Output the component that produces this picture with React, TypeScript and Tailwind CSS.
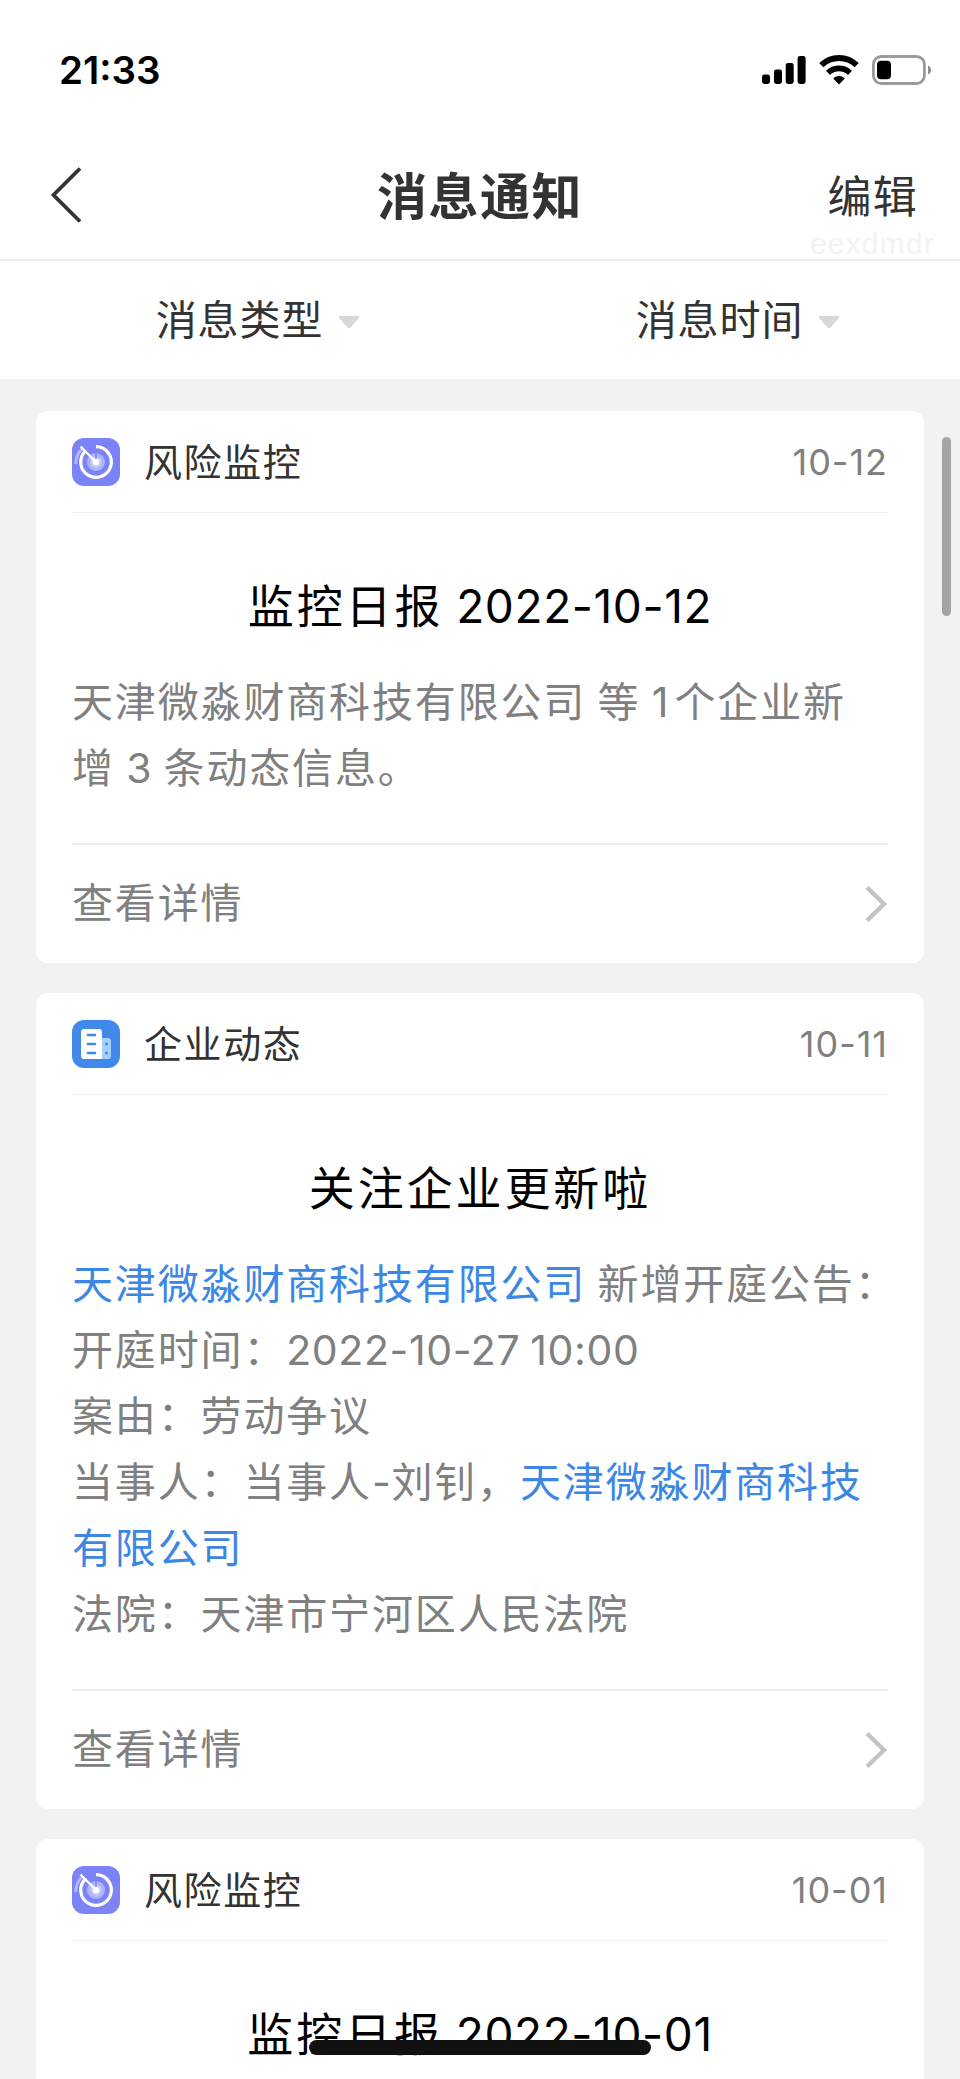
import type { ReactNode } from 'react';

type MessageType = 'risk' | 'company';

interface Message {
  id: number;
  type: MessageType;
  label: string;
  date: string;
  title: ReactNode;
  lines?: ReactNode[];
}

// latin digits sit tighter than the chinese text around them
const Num = ({ children }: { children: ReactNode }) => <span className="tracking-[0.6px]">{children}</span>;

const Company = ({ children }: { children: ReactNode }) => <span className="text-[#3d87e4]">{children}</span>;

const messages: Message[] = [
  {
    id: 1,
    type: 'risk',
    label: '风险监控',
    date: '10-12',
    title: <>监控日报 <Num>2022-10-12</Num></>,
    lines: [
      <>天津微淼财商科技有限公司 等 <span className="tracking-[6px]">1</span>个企业新</>,
      <>增 <Num>3</Num> 条动态信息。</>,
    ],
  },
  {
    id: 2,
    type: 'company',
    label: '企业动态',
    date: '10-11',
    title: '关注企业更新啦',
    lines: [
      <><Company>天津微淼财商科技有限公司</Company> 新增开庭公告：</>,
      <>开庭时间：<Num>2022-10-27 10:00</Num></>,
      '案由：劳动争议',
      <>当事人：当事人<Num>-</Num>刘钊，<Company>天津微淼财商科技</Company></>,
      <Company>有限公司</Company>,
      '法院：天津市宁河区人民法院',
    ],
  },
  {
    id: 3,
    type: 'risk',
    label: '风险监控',
    date: '10-01',
    title: <>监控日报 <Num>2022-10-01</Num></>,
  },
];

function RiskIcon() {
  return (
    <svg width="48" height="48" viewBox="0 0 48 48" fill="none">
      <rect width="48" height="48" rx="12" fill="#7c83f6" />
      <path d="M3.8 26A20 20 0 0 1 10 11" stroke="#b4b8fb" strokeWidth="3" />
      <circle cx="24" cy="24" r="9" fill="#b0b4fa" />
      <circle cx="24" cy="24" r="5.5" fill="#c9ccfc" />
      <path d="M24 14.5V24" stroke="#7c83f6" strokeWidth="1.5" />
      <path d="M24 8.7A15.3 15.3 0 1 1 13.6 12.8" stroke="#fff" strokeWidth="3.2" />
      <path d="M8.5 8.5L24 24" stroke="#fff" strokeWidth="2.4" />
      <circle cx="24" cy="24" r="3.2" fill="#fff" />
    </svg>
  );
}

function CompanyIcon() {
  return (
    <svg width="48" height="48" viewBox="0 0 48 48" fill="none">
      <rect width="48" height="48" rx="12" fill="#4189e8" />
      <path d="M29 18h7a3 3 0 0 1 3 3v15a3 3 0 0 1-3 3h-7z" fill="#a3cdfb" />
      <path d="M12 9h15a3 3 0 0 1 3 3v27H12a3 3 0 0 1-3-3V12a3 3 0 0 1 3-3z" fill="#fff" />
      <path d="M16 15h7M16 24h7M16 33h7" stroke="#4189e8" strokeWidth="2.6" strokeLinecap="round" />
      <circle cx="34.5" cy="24" r="1.5" fill="#4189e8" />
      <circle cx="34.5" cy="33" r="1.5" fill="#4189e8" />
    </svg>
  );
}

function StatusBar() {
  return (
    <div className="flex h-[140px] items-center justify-between pl-[59px] pr-[28px]">
      <span className="mt-px text-[38.5px] font-semibold text-black">21:33</span>
      <div className="flex items-center">
        <svg width="44" height="28" viewBox="0 0 44 28" className="mr-[13px]">
          <rect x="0" y="18.5" width="8" height="9.5" rx="2.4" />
          <rect x="12" y="13.5" width="8" height="14.5" rx="2.4" />
          <rect x="23.7" y="7" width="8" height="21" rx="2.4" />
          <rect x="35.6" y="0" width="8" height="28" rx="2.4" />
        </svg>
        <svg width="40" height="30" viewBox="0 0 40 30" fill="none" className="mr-[13px]">
          <path d="M2.3 10.2A25.5 25.5 0 0 1 37.7 10.2" stroke="#000" strokeWidth="6" />
          <path d="M9 17.8A16 16 0 0 1 31 17.8" stroke="#000" strokeWidth="5.8" />
          <path d="M14.2 23.4A8.3 8.3 0 0 1 25.8 23.4L20 29.4z" fill="#000" />
        </svg>
        <svg width="60" height="30" viewBox="0 0 60 30" fill="none">
          <rect x="1.4" y="1.5" width="51" height="27" rx="8" stroke="#9a9a9a" strokeWidth="2.8" />
          <rect x="5" y="5.8" width="14" height="18.5" rx="4" fill="#000" />
          <path d="M56 10.5c4 1.5 4 7.5 0 9z" fill="#8e8e8e" />
        </svg>
      </div>
    </div>
  );
}

function NavBar() {
  return (
    <div className="relative flex h-[121px] items-center justify-between border-b-2 border-[#eee] pb-[6px] pl-[50px] pr-[42px] text-[#333]">
      <svg width="32" height="56" viewBox="0 0 32 56" fill="none" className="-mt-[4px]">
        <path d="M30 1.5L3.5 28L30 54.5" stroke="#333" strokeWidth="3.8" />
      </svg>
      <h1 className="absolute inset-x-0 mt-[2px] text-center text-[50px] font-bold tracking-[1.5px]">消息通知</h1>
      <span className="text-[44px] tracking-[1.3px]">编辑</span>
      <span className="absolute bottom-[-7px] right-[25px] font-['Liberation_Sans'] text-[30px] tracking-[1.2px] text-[#f3f3f3]">
        eexdmdr
      </span>
    </div>
  );
}

function Filter({ label }: { label: string }) {
  return (
    <div className="flex flex-1 items-center justify-center pl-[36px]">
      <span className="mt-[2px] text-[41px] tracking-[0.9px] text-[#333]">{label}</span>
      <svg width="22" height="13" viewBox="0 0 22 13" className="ml-[15px] mt-[5px]">
        <path d="M1.5 0h19q1.5 .5 .5 2l-8.5 9.5q-1.5 1.5-3 0L1 2q-1-1.5 .5-2z" fill="#d8d8d8" />
      </svg>
    </div>
  );
}

function MessageCard({ message }: { message: Message }) {
  return (
    <div className="rounded-[12px] bg-white px-[36px]">
      <div className="flex h-[102px] items-center border-b border-[#eee]">
        {message.type === 'risk' ? <RiskIcon /> : <CompanyIcon />}
        <span className="ml-[24px] mt-[2px] flex-1 text-[38px] tracking-[1.6px] text-[#333]">{message.label}</span>
        <span className="mt-px text-[36px] tracking-[1px] text-[#808080]">{message.date}</span>
      </div>
      <h2 className="mt-[60px] text-center text-[46px] leading-[66px] tracking-[2.9px] text-black [word-spacing:-3px]">
        {message.title}
      </h2>
      {message.lines && (
        <>
          <div className="mb-[42px] mt-[30px] whitespace-nowrap text-[41px] leading-[66px] tracking-[1.85px] text-[#808080] [word-spacing:-2px]">
            {message.lines.map((line, i) => (
              <p key={i}>{line}</p>
            ))}
          </div>
          <div className="flex h-[120px] items-center justify-between border-t-2 border-[#eee]">
            <span className="text-[41px] tracking-[1.85px] text-[#808080]">查看详情</span>
            <svg width="24" height="36" viewBox="0 0 24 36" fill="none">
              <path d="M3 1.5L20 18L3 34.5" stroke="#c4c4c4" strokeWidth="4.4" />
            </svg>
          </div>
        </>
      )}
    </div>
  );
}

export default function App() {
  return (
    <div className="relative flex h-[2079px] w-[960px] flex-col overflow-hidden bg-[#f2f2f2] font-[Inter,'Noto_Sans_CJK_SC',sans-serif]">
      <header className="shrink-0 bg-white">
        <StatusBar />
        <NavBar />
        <div className="flex h-[118px]">
          <Filter label="消息类型" />
          <Filter label="消息时间" />
        </div>
      </header>

      {/* last card runs on below the screen edge */}
      <main className="-mb-[40px] flex grow flex-col gap-[30px] px-[36px] pt-[32px] [&>*:last-child]:grow">
        {messages.map((m) => (
          <MessageCard key={m.id} message={m} />
        ))}
      </main>

      <div className="absolute right-[9px] top-[437px] h-[179px] w-[9px] rounded-full bg-[#a4a4a4]" />
      <div className="absolute bottom-[24px] left-[309px] h-[15px] w-[342px] rounded-full bg-[#111]" />
    </div>
  );
}
